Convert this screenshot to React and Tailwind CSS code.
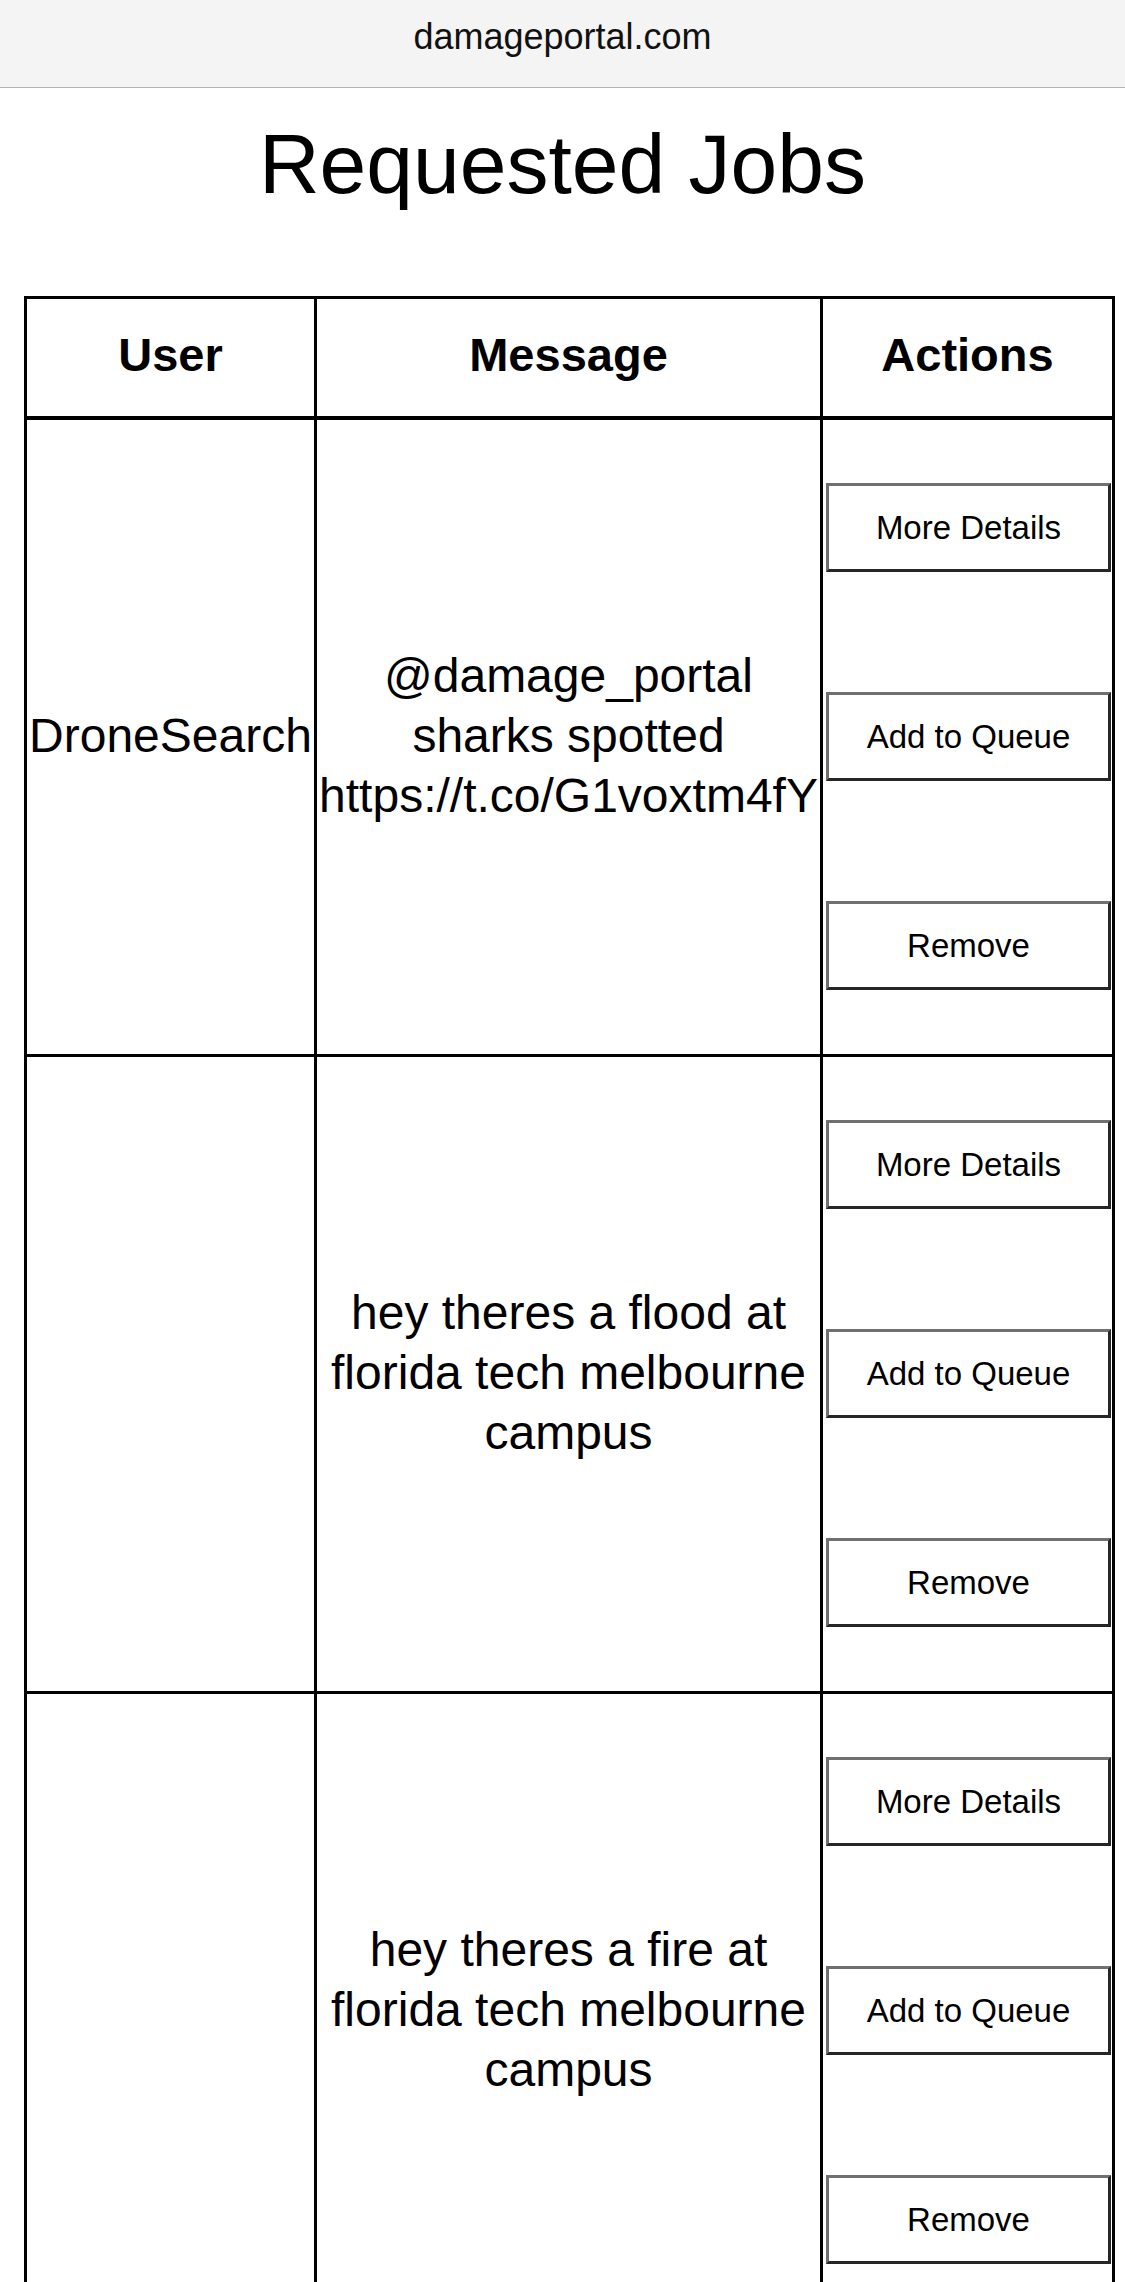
export default function App() {
  const rows = [
    { user: "DroneSearch", message: "@damage_portal sharks spotted https://t.co/G1voxtm4fY" },
    { user: "", message: "hey theres a flood at florida tech melbourne campus" },
    { user: "", message: "hey theres a fire at florida tech melbourne campus" },
  ];
  const btn =
    "h-[89px] w-full bg-white text-black text-[33px] leading-none border-[3px] border-t-[#707070] border-l-[#707070] border-b-[#262626] border-r-[#262626]";
  return (
    <div className="min-h-screen bg-white text-black font-['Liberation_Sans',Arial,sans-serif]">
      <div className="h-[88px] border-b border-[#b3b3b3] bg-[#f4f4f4] flex justify-center pt-[16px] text-[36px] leading-[42px] text-[#111]">
        damageportal.com
      </div>
      <h1 className="mt-[28px] text-center text-[84px] leading-[96px] font-normal">Requested Jobs</h1>
      <div className="mt-[84px] ml-[24px] w-[1091px] border-t-[3px] border-l-[3px] border-black grid grid-cols-[290px_506px_292px]">
        {["User", "Message", "Actions"].map((h) => (
          <div
            key={h}
            className="h-[121px] border-r-[3px] border-b-[4px] border-black flex items-center justify-center pb-[5px] text-[47px] leading-[54px] font-bold"
          >
            {h}
          </div>
        ))}
        {rows.map((r, i) => (
          <div key={i} className="contents">
            <div className="border-r-[3px] border-b-[3px] border-black flex items-center justify-center text-center text-[48px] leading-[60px] px-[1px] pb-[3px]">
              {r.user}
            </div>
            <div className="border-r-[3px] border-b-[3px] border-black flex items-center justify-center text-center text-[48px] leading-[60px] px-[1px] pb-[3px]">
              {r.message}
            </div>
            <div className="border-r-[3px] border-b-[3px] border-black flex flex-col pt-[63px] pb-[64px] gap-[120px] pl-[3px] pr-[1px]">
              <button className={btn}>More Details</button>
              <button className={btn}>Add to Queue</button>
              <button className={btn}>Remove</button>
            </div>
          </div>
        ))}
      </div>
    </div>
  );
}
